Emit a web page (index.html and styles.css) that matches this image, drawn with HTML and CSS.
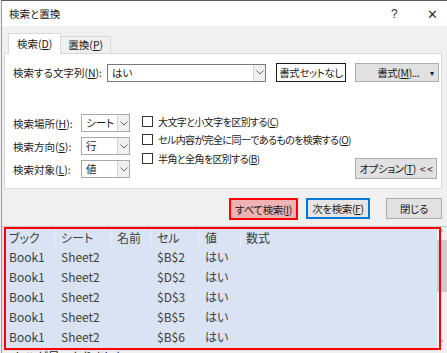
FILE: index.html
```html
<!DOCTYPE html>
<html lang="ja">
<head>
    <meta charset="UTF-8">
    <title>検索と置換</title>
    <link rel="stylesheet" href="styles.css">
</head>
<body>
    <div class="window">
        <div class="titlebar">
            <span class="title">検索と置換</span>
            <span class="help">?</span>
            <span class="close">✕</span>
        </div>

        <div class="tabs">
            <div class="tab active">検索(<u>D</u>)</div>
            <div class="tab">置換(<u>P</u>)</div>
        </div>

        <div class="panel">
            <div class="find-row">
                <span class="find-label">検索する文字列(<u>N</u>):</span>
                <div class="combo find-combo">
                    <span class="combo-text">はい</span>
                    <span class="combo-btn"><svg width="8" height="5" viewBox="0 0 8 5"><polyline points="0.5,0.5 4,4 7.5,0.5" fill="none" stroke="#666" stroke-width="1"/></svg></span>
                </div>
                <button class="btn btn-noformat">書式セットなし</button>
                <button class="btn btn-format"><span>書式(<u>M</u>)...</span><span class="caret">▾</span></button>
            </div>

            <div class="options">
                <div class="selects">
                    <span class="opt-label">検索場所(<u>H</u>):</span>
                    <div class="combo small-combo">
                        <span class="combo-text">シート</span>
                        <span class="combo-btn"><svg width="8" height="5" viewBox="0 0 8 5"><polyline points="0.5,0.5 4,4 7.5,0.5" fill="none" stroke="#666" stroke-width="1"/></svg></span>
                    </div>
                    <span class="opt-label">検索方向(<u>S</u>):</span>
                    <div class="combo small-combo">
                        <span class="combo-text">行</span>
                        <span class="combo-btn"><svg width="8" height="5" viewBox="0 0 8 5"><polyline points="0.5,0.5 4,4 7.5,0.5" fill="none" stroke="#666" stroke-width="1"/></svg></span>
                    </div>
                    <span class="opt-label">検索対象(<u>L</u>):</span>
                    <div class="combo small-combo">
                        <span class="combo-text">値</span>
                        <span class="combo-btn"><svg width="8" height="5" viewBox="0 0 8 5"><polyline points="0.5,0.5 4,4 7.5,0.5" fill="none" stroke="#666" stroke-width="1"/></svg></span>
                    </div>
                </div>

                <div class="checks">
                    <label class="check"><span class="box"></span>大文字と小文字を区別する(<u>C</u>)</label>
                    <label class="check"><span class="box"></span>セル内容が完全に同一であるものを検索する(<u>O</u>)</label>
                    <label class="check"><span class="box"></span>半角と全角を区別する(<u>B</u>)</label>
                </div>

                <button class="btn btn-options">オプション(<u>T</u>)&nbsp; &lt; &lt;</button>
            </div>
        </div>

        <div class="actions">
            <button class="btn btn-findall">すべて検索(<u>I</u>)</button>
            <button class="btn btn-next">次を検索(<u>F</u>)</button>
            <button class="btn btn-close">閉じる</button>
        </div>

        <div class="results">
            <div class="list">
                <div class="row head">
                    <span>ブック</span><span>シート</span><span>名前</span><span>セル</span><span>値</span><span>数式</span>
                </div>
                <div class="row"><span>Book1</span><span>Sheet2</span><span></span><span>$B$2</span><span>はい</span><span></span></div>
                <div class="row"><span>Book1</span><span>Sheet2</span><span></span><span>$D$2</span><span>はい</span><span></span></div>
                <div class="row"><span>Book1</span><span>Sheet2</span><span></span><span>$D$3</span><span>はい</span><span></span></div>
                <div class="row"><span>Book1</span><span>Sheet2</span><span></span><span>$B$5</span><span>はい</span><span></span></div>
                <div class="row"><span>Book1</span><span>Sheet2</span><span></span><span>$B$6</span><span>はい</span><span></span></div>
            </div>
            <div class="scrollbar">
                <span class="arrow">˄</span>
                <div class="thumb"></div>
                <span class="arrow down">˅</span>
            </div>
            <!-- red annotation box drawn over the list -->
            <div class="highlight"></div>
        </div>

        <div class="status">9 セルが見つかりました。</div>
    </div>
</body>
</html>
```

FILE: styles.css
```css
/* find & replace dialog */

body {
    margin: 0;
    width: 447px;
    height: 353px;
    overflow: hidden;
    background: #f0f0f0;
    font-family: "Noto Sans CJK JP", "Noto Sans", sans-serif;
    font-feature-settings: "palt";
    color: #1a1a1a;
}
u {
    text-decoration: underline;
    text-underline-offset: 1px;
}
.window {
    margin-left: 1px;
    height: 353px;
    border-top: 1px solid #5a5a5a;
    border-left: 1px solid #9a9a9a;
    box-sizing: border-box;
}
.titlebar {
    height: 25px;
    background: #fff;
    display: flex;
    align-items: center;
    font-size: 10.5px;
}
.title {
    padding-left: 7px;
    flex: 1;
}
.help {
    font-family: "Liberation Sans", sans-serif;
    font-size: 12px;
    width: 36px;
    color: #333;
}
.close {
    font-size: 13px;
    width: 20px;
    color: #333;
}

/* tabs */
.tabs {
    display: flex;
    align-items: flex-end;
    margin-top: 7px;
    padding-left: 6px;
    height: 20px;
    font-size: 10.5px;
}
.tab {
    height: 16px;
    line-height: 16px;
    padding: 0 7px;
    border: 1px solid #d9d9d9;
    border-bottom: none;
    border-left: none;
    background: #f0f0f0;
}
.tab.active {
    height: 20px;
    line-height: 20px;
    padding: 0 8px;
    background: #fff;
    border-left: 1px solid #d9d9d9;
    position: relative;
    top: 1px;
}

.panel {
    margin: 0 5px 0 2px;
    height: 136px;
    box-sizing: border-box;
    background: #fff;
    border: 1px solid #d9d9d9;
    padding: 9px 0 0 8px;
    font-size: 10.5px;
}
.find-row {
    display: flex;
    align-items: center;
    height: 19px;
}
.find-label {
    width: 94px;
}
.combo {
    display: flex;
    height: 18px;
    box-sizing: border-box;
    border: 1px solid #a9a9a9;
    background: #fff;
}
.combo-text {
    flex: 1;
    padding-left: 4px;
    line-height: 16px;
}
.combo-btn {
    width: 11px;
    display: flex;
    align-items: center;
    justify-content: center;
    background: #f0f0f0;
    border-left: 1px solid #d4d4d4;
}
.find-combo {
    width: 159px;
    border-color: #7a7a7a;
}
.btn {
    font-family: inherit;
    font-feature-settings: "palt";
    font-size: 10.5px;
    letter-spacing: -0.4px;
    color: #1a1a1a;
    background: #e1e1e1;
    border: 1px solid #adadad;
    padding: 0;
    height: 21px;
    box-sizing: border-box;
    white-space: nowrap;
    flex-shrink: 0;
}
.btn-noformat {
    margin-left: 10px;
    width: 70px;
    height: 19px;
    background: #fff;
    border: 1px solid #1a1a1a;
}
.btn-format {
    margin-left: 9px;
    width: 84px;
    height: 19px;
    display: flex;
    align-items: center;
    justify-content: flex-end;
    padding-right: 4px;
    gap: 11px;
}
.caret {
    font-size: 8px;
}

/* search options */
.options {
    display: flex;
    margin-top: 32px;
}
.selects {
    display: grid;
    grid-template-columns: 68px 49px;
    row-gap: 5px;
    align-items: center;
    flex-shrink: 0;
}
.small-combo {
    width: 49px;
}
.checks {
    display: flex;
    flex-direction: column;
    margin-left: 12px;
    margin-top: -2px;
    flex-shrink: 0;
    white-space: nowrap;
    font-size: 10px;
    letter-spacing: -0.6px;
}
.check {
    display: flex;
    align-items: center;
    height: 18.5px;
}
.box {
    width: 9px;
    height: 9px;
    border: 1px solid #333;
    margin-right: 5px;
}
.btn-options {
    align-self: flex-end;
    margin-left: auto;
    margin-right: 4px;
    margin-bottom: -1px;
    width: 82px;
}

/* bottom buttons */
.actions {
    display: flex;
    justify-content: flex-end;
    padding-right: 5px;
    margin-top: 9px;
    height: 22px;
}
.btn-findall {
    width: 69px;
    height: 22px;
    background: #efb3b3;
    border: 2px solid #f00;
    margin-right: 8px;
}
.btn-next {
    width: 64px;
    background: #e5e5e5;
    border: 2px solid #0078d7;
    margin-right: 16px;
}
.btn-close {
    width: 56px;
}

/* results list */
.results {
    position: relative;
    display: flex;
    margin-top: 6px;
    height: 124px;
    border-top: 1px solid #c8c8c8;
}
.list {
    flex: 1;
    background: #dae3f3;
    padding: 2px 0 0 2px;
    font-size: 12px;
    color: #404040;
}
.row {
    display: grid;
    grid-template-columns: 52px 56px 40px 48px 41px 1fr;
    height: 20px;
    line-height: 20px;
}
.row span {
    padding-left: 5px;
}
.row.head {
    height: 18px;
    line-height: 18px;
}
.row.head span {
    border-right: 1px solid #e6ebf6;
}
.row.head span:last-child {
    border-right: none;
}
.scrollbar {
    width: 10px;
    background: #f0f0f0;
    display: flex;
    flex-direction: column;
    align-items: center;
    font-size: 10px;
    color: #606060;
}
.arrow {
    height: 12px;
    line-height: 14px;
}
.arrow.down {
    margin-top: auto;
    line-height: 10px;
}
.thumb {
    width: 10px;
    height: 52px;
    background: #cdcdcd;
    margin-top: 1px;
}
.highlight {
    position: absolute;
    left: 2px;
    top: 0;
    width: 437px;
    height: 123px;
    box-sizing: border-box;
    border: 2px solid #f00;
}
.status {
    font-size: 12px;
    padding-left: 2px;
    line-height: 14px;
    margin-top: -1px;
}
```
